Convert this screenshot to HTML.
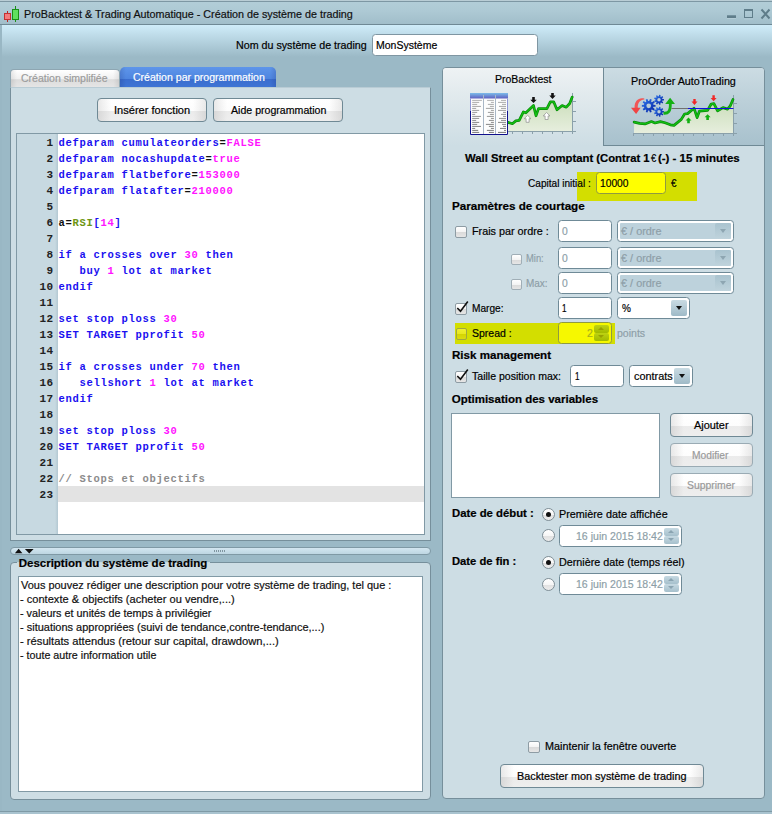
<!DOCTYPE html>
<html><head><meta charset="utf-8">
<style>
*{box-sizing:border-box;margin:0;padding:0}
html,body{width:772px;height:814px;overflow:hidden}
body{background:#9bb9c6;font-family:"Liberation Sans",Arial,sans-serif;font-size:11px;color:#000;position:relative}
.abs{position:absolute}
.t{position:absolute;white-space:nowrap;line-height:14px;height:14px;-webkit-text-stroke:0.2px;transform-origin:0 0}
.inp{position:absolute;background:#fff;border:1.2px solid #6f8a97;border-radius:3.5px}
.btn{position:absolute;border:1px solid #6f8995;border-radius:4px;
 background:linear-gradient(90deg,rgba(0,0,0,.085),rgba(0,0,0,0) 13px,rgba(0,0,0,0) calc(100% - 13px),rgba(0,0,0,.085)),linear-gradient(#ffffff 0,#fdfdfd 53%,#ebebeb 54%,#eeeeee 100%)}
.panel{position:absolute;background:#cddde4;border:1px solid #768f9b}
.cb{position:absolute;width:12px;height:12px;border:1px solid #8e9ca4;border-radius:2px;background:linear-gradient(#ffffff 0,#f4f4f4 50%,#dadada 51%,#e6e6e6 100%)}
.cb.sm{width:11px;height:11px;border-color:#a0aeb6}
.rb{position:absolute;width:13px;height:13px;border:1px solid #7f8e96;border-radius:50%;background:linear-gradient(#ffffff 0,#f6f6f6 50%,#e0e0e0 51%,#ececec 100%)}
.rb.on::after{content:"";position:absolute;left:3px;top:3px;width:5px;height:5px;border-radius:50%;background:#111}
.combo{position:absolute;background:#fff;border:1.2px solid #6f8a97;border-radius:3.5px}
.combo .ar{position:absolute;right:1.5px;top:1.5px;bottom:1.5px;width:16px;border-radius:2px;background:linear-gradient(#c9dbe3,#9fbac7)}
.combo .ar::after{content:"";position:absolute;left:4.5px;top:6.2px;border-left:3.5px solid transparent;border-right:3.5px solid transparent;border-top:4px solid #111}
.combo.dis::before{content:"";position:absolute;left:2px;top:2px;right:2px;bottom:2px;background:#bdd2dc;border-radius:1px}
.combo.dis .ar{background:linear-gradient(#a9c3cf,#bfd3dc)}
.combo.dis .ar::after{border-top-color:#8ea6b2}
.spin{position:absolute;width:15px;height:16px}
.spin i{position:absolute;left:0;width:15px;height:7.700px;border-radius:2px;background:linear-gradient(#c6d9e2,#a6c0cc)}
.spin i::after{content:"";position:absolute;left:4px;top:2.300px;border-left:3.500px solid transparent;border-right:3.500px solid transparent}
.spin i.u{top:0}.spin i.d{top:7.900px}
.spin i.u::after{border-bottom:3.500px solid #8aa4b1}
.spin i.d::after{border-top:3.500px solid #8aa4b1}
.spin.y i{background:linear-gradient(#bed212,#a2ba00)}
.spin.y i.u::after{border-bottom-color:#98a200}
.spin.y i.d::after{border-top-color:#98a200}
.code{font-family:"Liberation Mono","Courier New",monospace;font-size:10.5px;letter-spacing:0.7px;line-height:16px;white-space:pre}
.k{color:#1a10f0;font-weight:bold}
.p{color:#ff14ff;font-weight:bold}
.g{color:#6e9614;font-weight:bold}
.c{color:#8c8c8c;font-weight:bold}
.o{color:#111;font-weight:bold}
</style></head><body>
<!-- window chrome -->
<div class="abs" style="left:0;top:0;width:772px;height:25px;background:linear-gradient(#b3ced8 0,#adc9d4 45%,#a0bdc9 100%)"></div>
<div class="abs" style="left:0;top:0;width:772px;height:1px;background:#b9cdd5"></div>
<div class="abs" style="left:0;top:1px;width:772px;height:1px;background:#7d97a3"></div>
<div class="abs" style="left:2px;top:25px;width:770px;height:786px;background:linear-gradient(#cfecf9 0,#9bb9c6 32px,#9bb9c6 100%)"></div>
<div class="abs" style="left:0;top:24px;width:772px;height:1px;background:#6f8995"></div>
<div class="abs" style="left:0;top:25px;width:2px;height:786px;background:#99b7c4"></div>
<div class="abs" style="left:0;top:811px;width:772px;height:1px;background:#7f9aa6"></div>
<div class="abs" style="left:0;top:812px;width:772px;height:2px;background:#a9c3cf"></div>
<!-- app icon -->
<svg class="abs" style="left:2px;top:4px" width="20" height="20" viewBox="0 0 20 20">
<line x1="5.500" y1="7" x2="5.500" y2="18" stroke="#b82424" stroke-width="1"/>
<rect x="2.500" y="9.500" width="6" height="6" fill="#f47c7c" stroke="#c43030"/>
<line x1="13.500" y1="2" x2="13.500" y2="18" stroke="#189018" stroke-width="1"/>
<rect x="10.500" y="5.500" width="6" height="10" fill="#5fe05f" stroke="#189018"/>
</svg>
<!-- window controls -->
<svg class="abs" style="left:724px;top:6px" width="48" height="16" viewBox="0 0 48 16">
<rect x="3" y="9.300" width="9" height="2.700" fill="#5f7d8a"/><rect x="3" y="12" width="9" height="1" fill="#b9d0da" opacity=".7"/>
<rect x="20" y="3" width="9" height="2" fill="#5f7d8a"/><rect x="20.500" y="3.500" width="8" height="8" fill="none" stroke="#5f7d8a" stroke-width="1"/><rect x="20" y="12.500" width="9" height="1" fill="#b9d0da" opacity=".7"/>
<path d="M37.500 3.500 L45.500 12.500 M45.500 3.500 L37.500 12.500" stroke="#5f7d8a" stroke-width="2" fill="none"/>
</svg>

<div class="inp" style="left:372px;top:34px;width:166px;height:22px;border:1px solid #7f96a2"></div>

<!-- left tabs -->
<div class="abs" style="left:10px;top:69px;width:110px;height:19px;border:1px solid #8ea6b2;border-bottom:none;border-radius:4px 4px 0 0;background:linear-gradient(90deg,rgba(0,0,0,.08),rgba(0,0,0,0) 6px,rgba(0,0,0,0) calc(100% - 6px),rgba(0,0,0,.08)),linear-gradient(#ffffff 0,#f0f0f0 52%,#dcdcdc 53%,#e6e6e6 100%)"></div>
<div class="abs" style="left:120px;top:67px;width:156px;height:21px;border-radius:5px 5px 0 0;background:linear-gradient(90deg,rgba(0,0,60,.12),rgba(0,0,0,0) 6px,rgba(0,0,0,0) calc(100% - 6px),rgba(0,0,60,.12)),linear-gradient(#5e95ea 0,#4f86e0 55%,#3a6dce 56%,#3f75d5 100%)"></div>

<!-- left panel -->
<div class="panel" style="left:10px;top:87px;width:421px;height:454px;border-top-color:#b9ccd5"></div>
<div class="btn" style="left:97px;top:98px;width:110px;height:24px"></div>
<div class="btn" style="left:213px;top:98px;width:130px;height:24px"></div>

<!-- editor -->
<div class="abs" style="left:16px;top:133px;width:409px;height:402px;background:#fff;border:1px solid #8199a5"></div>
<div class="abs" style="left:17px;top:134px;width:41px;height:400px;background:linear-gradient(90deg,#c7d9e1 0,#c7d9e1 38px,#b3c8d2 41px)"></div>
<div class="abs" style="left:58px;top:486px;width:366px;height:16px;background:#e3e3e3"></div>
<div class="abs code" style="left:17px;top:134.5px;width:36.5px;text-align:right;color:#222;font-weight:bold;font-size:11px;letter-spacing:0.4px">1
2
3
4
5
6
7
8
9
10
11
12
13
14
15
16
17
18
19
20
21
22
23</div>
<div class="abs code" style="left:58.500px;top:134.7px"><span class="k">defparam cumulateorders</span><span class="o">=</span><span class="p">FALSE</span>
<span class="k">defparam nocashupdate</span><span class="o">=</span><span class="p">true</span>
<span class="k">defparam flatbefore</span><span class="o">=</span><span class="p">153000</span>
<span class="k">defparam flatafter</span><span class="o">=</span><span class="p">210000</span>

<span class="o">a=</span><span class="g">RSI</span><span class="k">[</span><span class="p">14</span><span class="k">]</span>

<span class="k">if a crosses over </span><span class="p">30</span><span class="k"> then</span>
<span class="k">   buy </span><span class="p">1</span><span class="k"> lot at market</span>
<span class="k">endif</span>

<span class="k">set stop ploss </span><span class="p">30</span>
<span class="k">SET TARGET pprofit </span><span class="p">50</span>

<span class="k">if a crosses under </span><span class="p">70</span><span class="k"> then</span>
<span class="k">   sellshort </span><span class="p">1</span><span class="k"> lot at market</span>
<span class="k">endif</span>

<span class="k">set stop ploss </span><span class="p">30</span>
<span class="k">SET TARGET pprofit </span><span class="p">50</span>

<span class="c">// Stops et objectifs</span>
</div>

<!-- splitter -->
<div class="abs" style="left:10px;top:547px;width:421px;height:8px;border:1px solid #7f99a5;border-radius:4px;background:linear-gradient(#d3e6f0,#bdd6e2)"></div>
<svg class="abs" style="left:14px;top:548px" width="22" height="6"><path d="M0.900 5.200 L4.650 0.800 L8.400 5.200Z M10.900 1 L19.600 1 L15.250 5.400Z" fill="#111"/></svg>
<div class="abs" style="left:214px;top:550px;width:11px;height:2px;background:repeating-linear-gradient(90deg,#7f95a0 0 1px,transparent 1px 2px)"></div>

<!-- description group -->
<div class="panel" style="left:10px;top:562px;width:421px;height:238px;border-radius:4px"></div>
<div class="abs" style="left:17px;top:562px;width:193px;height:1px;background:#c6d8e0"></div>
<div class="abs" style="left:18px;top:576px;width:405px;height:216px;background:#fff;border:1px solid #8199a5"></div>

<!-- right panel -->
<div class="panel" style="left:442px;top:67px;width:323px;height:732px;border-radius:4px"></div>
<div class="abs" style="left:443px;top:68px;width:161px;height:78px;border-radius:3px 0 0 0;background:linear-gradient(#eef2f4 0,#e3ebee 30%,#cddde4 100%)"></div>
<div class="abs" style="left:603px;top:68px;width:161px;height:78px;background:linear-gradient(#ccdce3 0,#bcd0d9 42%,#a8c1cd 100%);border-left:1px solid #6f8995;border-bottom:1px solid #6f8995;border-radius:0 3px 0 0"></div>
<svg class="abs" style="left:465px;top:88px" width="115" height="52" viewBox="0 0 115 52"><defs><linearGradient id="ga" x1="0" y1="0" x2="0" y2="1"><stop offset="0" stop-color="#c9dcb8"/><stop offset="1" stop-color="#e6eedd"/></linearGradient><linearGradient id="gh" x1="0" y1="0" x2="0" y2="1"><stop offset="0" stop-color="#7dbcea"/><stop offset="1" stop-color="#5f5fc0"/></linearGradient></defs><polygon points="42.9,34.4 47.4,35.7 50.8,32.9 54.2,32.4 58.4,23.9 60.9,24.8 68.5,17.5 71.0,27.8 73.5,20.6 81.9,20.6 85.3,13.8 88.7,13.8 92.0,21.8 97.1,17.5 101.3,19.2 104.7,15.5 107.2,9.1 107.5,43.0 42.9,43.0" fill="url(#ga)"/><path d="M43 43.5 H108 M107.5 5 V46" stroke="#8aa0aa" stroke-width="1" fill="none"/><path d="M47.5 43 V46 M57.5 43 V46 M67.5 43 V46 M77.5 43 V46 M87.5 43 V46 M97.5 43 V46 M107 13.5 H111 M107 23.5 H111 M107 33.5 H111 M107 43.5 H111 " stroke="#8aa0aa" stroke-width="1" fill="none"/><polyline points="42.9,34.4 47.4,35.7 50.8,32.9 54.2,32.4 58.4,23.9 60.9,24.8 68.5,17.5 71.0,27.8 73.5,20.6 81.9,20.6 85.3,13.8 88.7,13.8 92.0,21.8 97.1,17.5 101.3,19.2 104.7,15.5 107.2,9.1" fill="none" stroke="#0a8a0a" stroke-width="2.7" stroke-linejoin="round" stroke-linecap="round"/><polyline points="42.9,34.4 47.4,35.7 50.8,32.9 54.2,32.4 58.4,23.9 60.9,24.8 68.5,17.5 71.0,27.8 73.5,20.6 81.9,20.6 85.3,13.8 88.7,13.8 92.0,21.8 97.1,17.5 101.3,19.2 104.7,15.5 107.2,9.1" fill="none" stroke="#12c012" stroke-width="1.3" stroke-linejoin="round" stroke-linecap="round"/><polygon points="67.2,9.1 69.8,9.1 69.8,11.7 71.7,11.7 68.5,15.1 65.3,11.7 67.2,11.7" fill="#111"/><polygon points="86.2,5.0 88.8,5.0 88.8,7.6 90.7,7.6 87.5,11.0 84.3,7.6 86.2,7.6" fill="#111"/><polygon points="62.6,27.3 66.0,30.7 64.1,30.7 64.1,34.3 61.1,34.3 61.1,30.7 59.2,30.7" fill="#fff" stroke="#8c8c8c" stroke-width="0.7"/><polygon points="81.6,24.5 85.0,27.9 83.1,27.9 83.1,31.5 80.1,31.5 80.1,27.9 78.2,27.9" fill="#fff" stroke="#8c8c8c" stroke-width="0.7"/><rect x="5" y="5" width="38" height="42" fill="#fdfdfd"/><rect x="5" y="5" width="38" height="5.5" fill="url(#gh)"/><path d="M5.5 10.5 V23 M42.5 10.5 V23" stroke="#8f96d6" stroke-width="1"/><path d="M5.5 23 V46.5 H42.5 V23" stroke="#10108c" stroke-width="1" fill="none"/><path d="M18.5 7 V46 M30.5 7 V46" stroke="#a9b7c6" stroke-width="1"/><path d="M7.2 12.4 h9.7 M22.1 12.4 h6.8 M36.0 12.4 h5" stroke="#a8a8a8" stroke-width="0.9"/><path d="M7.2 14.4 h7 M25.9 14.4 h3 M33.0 14.4 h8" stroke="#a4a4a4" stroke-width="0.9"/><path d="M7.2 16.4 h5 M22.9 16.4 h6 M37.0 16.4 h4" stroke="#a0a0a0" stroke-width="0.9"/><path d="M7.2 18.4 h8.8 M24.9 18.4 h4 M34.0 18.4 h7" stroke="#9c9c9c" stroke-width="0.9"/><path d="M7.2 20.4 h4 M20.9 20.4 h8 M36.0 20.4 h5" stroke="#989898" stroke-width="0.9"/><path d="M7.2 22.4 h7 M25.9 22.4 h3 M33.0 22.4 h8" stroke="#949494" stroke-width="0.9"/><path d="M7.2 24.4 h5 M22.9 24.4 h6 M38.0 24.4 h3" stroke="#909090" stroke-width="0.9"/><path d="M7.2 26.4 h3 M24.9 26.4 h4 M36.0 26.4 h5" stroke="#8c8c8c" stroke-width="0.9"/><path d="M7.2 28.4 h8.8 M21.9 28.4 h7 M38.0 28.4 h3" stroke="#888888" stroke-width="0.9"/><path d="M7.2 30.4 h7 M25.9 30.4 h3 M34.0 30.4 h7" stroke="#848484" stroke-width="0.9"/><path d="M7.2 32.4 h4 M23.9 32.4 h5 M36.0 32.4 h5" stroke="#808080" stroke-width="0.9"/><path d="M7.2 34.4 h7 M25.9 34.4 h3 M33.0 34.4 h8" stroke="#7c7c7c" stroke-width="0.9"/><path d="M7.2 36.4 h5 M20.9 36.4 h8 M37.0 36.4 h4" stroke="#787878" stroke-width="0.9"/><path d="M7.2 38.4 h8.8 M23.9 38.4 h5 M38.0 38.4 h3" stroke="#747474" stroke-width="0.9"/><path d="M7.2 40.4 h3 M25.9 40.4 h3 M35.0 40.4 h6" stroke="#707070" stroke-width="0.9"/><path d="M7.2 42.4 h6 M21.9 42.4 h7 M39.0 42.4 h2" stroke="#6c6c6c" stroke-width="0.9"/><path d="M7.2 44.4 h7 M23.9 44.4 h5 M33.0 44.4 h8" stroke="#686868" stroke-width="0.9"/></svg>
<svg class="abs" style="left:628px;top:92px" width="112" height="48" viewBox="0 0 112 48"><defs><linearGradient id="gb" x1="0" y1="0" x2="0" y2="1"><stop offset="0" stop-color="#c9dcb8"/><stop offset="1" stop-color="#e6eedd"/></linearGradient><linearGradient id="gg" x1="0" y1="0" x2="1" y2="1"><stop offset="0" stop-color="#2f78ec"/><stop offset="1" stop-color="#0420a0"/></linearGradient></defs><polygon points="6.1,30.1 11.6,31.4 17.0,31.9 23.4,29.6 27.0,31.0 32.4,29.6 37.0,30.7 42.4,32.8 46.0,33.4 50.6,29.6 53.3,27.4 56.6,22.0 59.6,21.6 66.0,16.2 69.1,25.6 71.4,19.2 79.6,18.3 83.2,12.0 85.9,11.6 89.6,18.9 95.0,15.6 99.5,17.1 102.3,13.8 105.0,7.5 105.5,41.0 6.0,41.0" fill="url(#gb)"/><path d="M5.5 41.5 H106 M105.5 3 V44" stroke="#8aa0aa" stroke-width="1" fill="none"/><path d="M5.5 41 V44 M15.5 41 V44 M25.5 41 V44 M35.5 41 V44 M45.5 41 V44 M55.5 41 V44 M65.5 41 V44 M75.5 41 V44 M85.5 41 V44 M95.5 41 V44 M105 11.5 H109 M105 21.5 H109 M105 31.5 H109 M105 41.5 H109 " stroke="#8aa0aa" stroke-width="1" fill="none"/><path d="M43.5 16.5 H60" stroke="#707070" stroke-width="1"/><polyline points="6.1,30.1 11.6,31.4 17.0,31.9 23.4,29.6 27.0,31.0 32.4,29.6 37.0,30.7 42.4,32.8 46.0,33.4 50.6,29.6 53.3,27.4 56.6,22.0 59.6,21.6 66.0,16.2 69.1,25.6 71.4,19.2 79.6,18.3 83.2,12.0 85.9,11.6 89.6,18.9 95.0,15.6 99.5,17.1 102.3,13.8 105.0,7.5" fill="none" stroke="#0a8a0a" stroke-width="2.7" stroke-linejoin="round" stroke-linecap="round"/><polyline points="6.1,30.1 11.6,31.4 17.0,31.9 23.4,29.6 27.0,31.0 32.4,29.6 37.0,30.7 42.4,32.8 46.0,33.4 50.6,29.6 53.3,27.4 56.6,22.0 59.6,21.6 66.0,16.2 69.1,25.6 71.4,19.2 79.6,18.3 83.2,12.0 85.9,11.6 89.6,18.9 95.0,15.6 99.5,17.1 102.3,13.8 105.0,7.5" fill="none" stroke="#12c012" stroke-width="1.3" stroke-linejoin="round" stroke-linecap="round"/><path d="M60 16.5 H105.5" stroke="#1010e0" stroke-width="1.2"/><polygon points="65.3,6.9 67.7,6.9 67.7,9.5 69.5,9.5 66.5,12.9 63.5,9.5 65.3,9.5" fill="#f02828"/><polygon points="84.4,3.3 86.8,3.3 86.8,5.9 88.6,5.9 85.6,9.3 82.6,5.9 84.4,5.9" fill="#f02828"/><polygon points="60.5,25.6 63.5,28.6 61.8,28.6 61.8,31.2 59.2,31.2 59.2,28.6 57.5,28.6" fill="#10b010"/><polygon points="79.6,22.3 82.6,25.3 80.9,25.3 80.9,27.9 78.3,27.9 78.3,25.3 76.6,25.3" fill="#10b010"/><path d="M16.299999999999955 6.599999999999994 C11 5.200000000000003 6.2000000000000455 8.5 6.600000000000023 16.200000000000003 L9.799999999999955 16.200000000000003 C9.399999999999977 11 12 7.599999999999994 16.299999999999955 7.400000000000006Z" fill="#f25656"/><polygon points="3.0,15.8 12.6,15.8 8.1,21.9" fill="#f04444"/><path d="M25.42 12.78 L27.55 12.94 L27.55 14.66 L25.42 14.82 L25.12 15.75 L26.75 17.12 L25.73 18.52 L23.92 17.40 L23.13 17.97 L23.64 20.04 L21.99 20.58 L21.18 18.61 L20.22 18.61 L19.41 20.58 L17.76 20.04 L18.27 17.97 L17.48 17.40 L15.67 18.52 L14.65 17.12 L16.28 15.75 L15.98 14.82 L13.85 14.66 L13.85 12.94 L15.98 12.78 L16.28 11.85 L14.65 10.48 L15.67 9.08 L17.48 10.20 L18.27 9.63 L17.76 7.56 L19.41 7.02 L20.22 8.99 L21.18 8.99 L21.99 7.02 L23.64 7.56 L23.13 9.63 L23.92 10.20 L25.73 9.08 L26.75 10.48 L25.12 11.85Z M23.05 13.80 A2.35 2.35 0 1 0 18.35 13.80 A2.35 2.35 0 1 0 23.05 13.80Z" fill="url(#gg)" fill-rule="evenodd"/><path d="M34.40 6.98 L35.95 7.10 L35.95 8.50 L34.40 8.62 L34.13 9.36 L35.24 10.45 L34.35 11.52 L33.08 10.62 L32.40 11.01 L32.55 12.56 L31.17 12.80 L30.78 11.29 L30.01 11.16 L29.13 12.44 L27.92 11.74 L28.59 10.33 L28.08 9.74 L26.59 10.15 L26.11 8.84 L27.52 8.19 L27.52 7.41 L26.11 6.76 L26.59 5.45 L28.08 5.86 L28.59 5.27 L27.92 3.86 L29.13 3.16 L30.01 4.44 L30.78 4.31 L31.17 2.80 L32.55 3.04 L32.40 4.59 L33.08 4.98 L34.35 4.08 L35.24 5.15 L34.13 6.24Z M32.70 7.80 A1.70 1.70 0 1 0 29.30 7.80 A1.70 1.70 0 1 0 32.70 7.80Z" fill="url(#gg)" fill-rule="evenodd"/><path d="M34.40 18.98 L35.95 19.10 L35.95 20.50 L34.40 20.62 L34.13 21.36 L35.24 22.45 L34.35 23.52 L33.08 22.62 L32.40 23.01 L32.55 24.56 L31.17 24.80 L30.78 23.29 L30.01 23.16 L29.13 24.44 L27.92 23.74 L28.59 22.33 L28.08 21.74 L26.59 22.15 L26.11 20.84 L27.52 20.19 L27.52 19.41 L26.11 18.76 L26.59 17.45 L28.08 17.86 L28.59 17.27 L27.92 15.86 L29.13 15.16 L30.01 16.44 L30.78 16.31 L31.17 14.80 L32.55 15.04 L32.40 16.59 L33.08 16.98 L34.35 16.08 L35.24 17.15 L34.13 18.24Z M32.70 19.80 A1.70 1.70 0 1 0 29.30 19.80 A1.70 1.70 0 1 0 32.70 19.80Z" fill="url(#gg)" fill-rule="evenodd"/><path d="M35.5 21.200000000000003 C40.5 21.599999999999994 42.60000000000002 19 42.299999999999955 11.5" fill="none" stroke="#14b014" stroke-width="2.8" stroke-linecap="butt"/><polygon points="37.2,11.9 47.0,11.9 42.1,5.7" fill="#14b014"/></svg>

<!-- capital -->
<div class="abs" style="left:576.500px;top:172px;width:120.500px;height:28.500px;background:#d3de00"></div>
<div class="inp" style="left:596px;top:172.200px;width:70px;height:21.500px;background:#ffff00;border-color:#8f9a40"></div>

<!-- courtage -->
<div class="cb" style="left:455px;top:226px"></div>
<div class="inp" style="left:558px;top:220.200px;width:54px;height:21.500px"></div>
<div class="combo dis" style="left:617.200px;top:220.200px;width:116.500px;height:21.500px"><div class="ar"></div></div>
<div class="cb sm" style="left:510.500px;top:253.500px"></div>
<div class="inp" style="left:558px;top:247.200px;width:54px;height:21.500px"></div>
<div class="combo dis" style="left:617.200px;top:247.200px;width:116.500px;height:21.500px"><div class="ar"></div></div>
<div class="cb sm" style="left:510.500px;top:278.500px"></div>
<div class="inp" style="left:558px;top:272.200px;width:54px;height:21.500px"></div>
<div class="combo dis" style="left:617.200px;top:272.200px;width:116.500px;height:21.500px"><div class="ar"></div></div>

<div class="cb" style="left:455px;top:303px"></div>
<svg class="abs" style="left:456px;top:300px" width="14" height="14" viewBox="0 0 14 14"><path d="M1.300 8 L4.500 11.300 L11.800 1.500" fill="none" stroke="#111" stroke-width="1.600"/></svg>
<div class="inp" style="left:558px;top:297.200px;width:54px;height:21.500px"></div>
<div class="combo" style="left:617.200px;top:297.200px;width:72.500px;height:21.500px"><div class="ar"></div></div>

<div class="abs" style="left:455px;top:323px;width:160px;height:20.500px;background:#d3de00"></div>
<div class="cb" style="left:455.500px;top:328px;width:11.500px;height:11.500px;background:linear-gradient(#f0f030 0,#e8e820 50%,#d4d400 51%,#dcdc10 100%);border-color:#a0a840"></div>
<div class="inp" style="left:558px;top:322.200px;width:54px;height:21.500px;background:#f6f800;border-color:#8f9a40"></div>
<div class="spin y" style="left:594px;top:325.100px"><i class="u"></i><i class="d"></i></div>

<div class="cb" style="left:455px;top:370.500px"></div>
<svg class="abs" style="left:456px;top:367.500px" width="14" height="14" viewBox="0 0 14 14"><path d="M1.300 8 L4.500 11.300 L11.800 1.500" fill="none" stroke="#111" stroke-width="1.600"/></svg>
<div class="inp" style="left:570.200px;top:365.300px;width:54px;height:21.500px"></div>
<div class="combo" style="left:629.200px;top:365.300px;width:63.800px;height:21.500px"><div class="ar"></div></div>

<!-- optimisation -->
<div class="abs" style="left:451px;top:413px;width:209px;height:84.500px;background:#fff;border:1px solid #8199a5"></div>
<div class="btn" style="left:670px;top:413px;width:83px;height:23.500px"></div>
<div class="btn" style="left:670px;top:443px;width:83px;height:23.500px;border-color:#9aabb4"></div>
<div class="btn" style="left:670px;top:473px;width:83px;height:23.500px;border-color:#9aabb4"></div>

<!-- dates -->
<div class="rb on" style="left:542px;top:508px"></div>
<div class="rb" style="left:542px;top:529px"></div>
<div class="inp" style="left:559px;top:525px;width:122.500px;height:21.500px"></div>
<div class="spin" style="left:664px;top:528px"><i class="u"></i><i class="d"></i></div>
<div class="rb on" style="left:542px;top:556px"></div>
<div class="rb" style="left:542px;top:577.500px"></div>
<div class="inp" style="left:559px;top:573px;width:122.500px;height:21.500px"></div>
<div class="spin" style="left:664px;top:576px"><i class="u"></i><i class="d"></i></div>

<!-- bottom -->
<div class="cb" style="left:528px;top:741px"></div>
<div class="btn" style="left:500px;top:763.500px;width:204px;height:24px"></div>

<div class="t" style="left:24.40px;top:7.02px;font-size:11.5px;color:#111;transform:scaleX(0.9352);">ProBacktest &amp; Trading Automatique - Création de système de trading</div>
<div class="t" style="left:236.30px;top:38.10px;font-size:11.25px;transform:scaleX(0.9504);">Nom du système de trading</div>
<div class="t" style="left:375.60px;top:38.10px;font-size:11.25px;transform:scaleX(0.9328);">MonSystème</div>
<div class="t" style="left:20.70px;top:71.10px;font-size:11.25px;color:#9c9c9c;transform:scaleX(0.9352);">Création simplifiée</div>
<div class="t" style="left:132.90px;top:70.10px;font-size:11.25px;color:#fff;transform:scaleX(0.9371);">Création par programmation</div>
<div class="t" style="left:113.52px;top:103.10px;font-size:11.25px;transform:scaleX(0.9818);">Insérer fonction</div>
<div class="t" style="left:230.50px;top:103.10px;font-size:11.25px;transform:scaleX(0.9412);">Aide programmation</div>
<div class="t" style="left:18.70px;top:556.02px;font-size:11.5px;font-weight:bold;">Description du système de trading</div>
<div class="t" style="left:494.50px;top:72.10px;font-size:11.25px;transform:scaleX(0.9313);">ProBacktest</div>
<div class="t" style="left:631.40px;top:74.10px;font-size:11.25px;transform:scaleX(0.9563);">ProOrder AutoTrading</div>
<div class="t" style="left:527.60px;top:176.10px;font-size:11.25px;transform:scaleX(0.8969);">Capital initial :</div>
<div class="t" style="left:600.30px;top:176.10px;font-size:11.25px;transform:scaleX(0.9121);">10000</div>
<div class="t" style="left:670.80px;top:176.10px;font-size:11.25px;transform:scaleX(0.8857);">€</div>
<div class="t" style="left:451.70px;top:198.62px;font-size:11.5px;font-weight:bold;transform:scaleX(1.0127);">Paramètres de courtage</div>
<div class="t" style="left:471.60px;top:224.10px;font-size:11.25px;transform:scaleX(0.9600);">Frais par ordre :</div>
<div class="t" style="left:562.00px;top:224.10px;font-size:11.25px;color:#8e9fa8;transform:scaleX(0.9167);">0</div>
<div class="t" style="left:621.00px;top:224.10px;font-size:11.25px;color:#8e9fa8;transform:scaleX(0.9678);">€ / ordre</div>
<div class="t" style="left:526.00px;top:251.10px;font-size:11.25px;color:#8e9fa8;transform:scaleX(0.8330);">Min:</div>
<div class="t" style="left:562.00px;top:251.10px;font-size:11.25px;color:#8e9fa8;transform:scaleX(0.9167);">0</div>
<div class="t" style="left:621.00px;top:251.10px;font-size:11.25px;color:#8e9fa8;transform:scaleX(0.9678);">€ / ordre</div>
<div class="t" style="left:526.00px;top:276.10px;font-size:11.25px;color:#8e9fa8;transform:scaleX(0.8865);">Max:</div>
<div class="t" style="left:562.00px;top:276.10px;font-size:11.25px;color:#8e9fa8;transform:scaleX(0.9167);">0</div>
<div class="t" style="left:621.00px;top:276.10px;font-size:11.25px;color:#8e9fa8;transform:scaleX(0.9678);">€ / ordre</div>
<div class="t" style="left:471.60px;top:301.10px;font-size:11.25px;transform:scaleX(0.9000);">Marge:</div>
<div class="t" style="left:562.30px;top:301.10px;font-size:11.25px;transform:scaleX(0.7200);">1</div>
<div class="t" style="left:622.10px;top:301.10px;font-size:11.25px;transform:scaleX(0.8900);">%</div>
<div class="t" style="left:471.60px;top:326.10px;font-size:11.25px;transform:scaleX(0.9339);">Spread :</div>
<div class="t" style="left:587.20px;top:326.10px;font-size:11.25px;color:#a9b11c;transform:scaleX(0.9333);">2</div>
<div class="t" style="left:616.70px;top:326.10px;font-size:11.25px;color:#8e9fa8;transform:scaleX(0.9376);">points</div>
<div class="t" style="left:451.70px;top:348.02px;font-size:11.5px;font-weight:bold;transform:scaleX(1.0061);">Risk management</div>
<div class="t" style="left:471.60px;top:369.10px;font-size:11.25px;transform:scaleX(0.9366);">Taille position max:</div>
<div class="t" style="left:574.60px;top:369.10px;font-size:11.25px;transform:scaleX(0.7200);">1</div>
<div class="t" style="left:633.50px;top:369.10px;font-size:11.25px;transform:scaleX(0.9655);">contrats</div>
<div class="t" style="left:451.70px;top:392.02px;font-size:11.5px;font-weight:bold;">Optimisation des variables</div>
<div class="t" style="left:694.10px;top:418.10px;font-size:11.25px;transform:scaleX(0.9694);">Ajouter</div>
<div class="t" style="left:691.60px;top:448.10px;font-size:11.25px;color:#9a9a9a;transform:scaleX(0.9090);">Modifier</div>
<div class="t" style="left:686.50px;top:478.10px;font-size:11.25px;color:#9a9a9a;transform:scaleX(0.9243);">Supprimer</div>
<div class="t" style="left:451.70px;top:506.02px;font-size:11.5px;font-weight:bold;transform:scaleX(0.9850);">Date de début :</div>
<div class="t" style="left:559.20px;top:507.10px;font-size:11.25px;transform:scaleX(0.9616);">Première date affichée</div>
<div class="t" style="left:576.00px;top:529.10px;font-size:11.25px;color:#8e9fa8;transform:scaleX(0.9380);">16 juin 2015 18:42</div>
<div class="t" style="left:451.70px;top:554.02px;font-size:11.5px;font-weight:bold;transform:scaleX(0.9757);">Date de fin :</div>
<div class="t" style="left:559.20px;top:555.10px;font-size:11.25px;transform:scaleX(0.9562);">Dernière date (temps réel)</div>
<div class="t" style="left:576.00px;top:577.10px;font-size:11.25px;color:#8e9fa8;transform:scaleX(0.9380);">16 juin 2015 18:42</div>
<div class="t" style="left:544.50px;top:739.10px;font-size:11.25px;transform:scaleX(0.9591);">Maintenir la fenêtre ouverte</div>
<div class="t" style="left:517.40px;top:769.10px;font-size:11.25px;transform:scaleX(0.9610);">Backtester mon système de trading</div>
<div class="t" style="left:464.60px;top:151.02px;font-size:11.5px;font-weight:bold;transform:scaleX(0.9816);">Wall Street au comptant (Contrat 1</div>
<div class="t" style="left:651.30px;top:151.02px;font-size:11.5px;transform:scaleX(.82);transform-origin:0 0;">€</div>
<div class="t" style="left:657.90px;top:151.02px;font-size:11.5px;font-weight:bold;">(-) - 15 minutes</div>
<div class="t" style="left:20.60px;top:577.60px;font-size:11.25px;color:#111;transform:scaleX(0.9740);">Vous pouvez rédiger une description pour votre système de trading, tel que :</div>
<div class="t" style="left:20.40px;top:591.60px;font-size:11.25px;color:#111;transform:scaleX(0.9840);">- contexte &amp; objectifs (acheter ou vendre,...)</div>
<div class="t" style="left:20.40px;top:605.60px;font-size:11.25px;color:#111;transform:scaleX(0.9629);">- valeurs et unités de temps à privilégier</div>
<div class="t" style="left:20.40px;top:619.60px;font-size:11.25px;color:#111;transform:scaleX(0.9753);">- situations appropriées (suivi de tendance,contre-tendance,...)</div>
<div class="t" style="left:20.40px;top:633.60px;font-size:11.25px;color:#111;transform:scaleX(0.9948);">- résultats attendus (retour sur capital, drawdown,...)</div>
<div class="t" style="left:20.40px;top:647.60px;font-size:11.25px;color:#111;transform:scaleX(0.9528);">- toute autre information utile</div>
<!--WALL-->
</body></html>
